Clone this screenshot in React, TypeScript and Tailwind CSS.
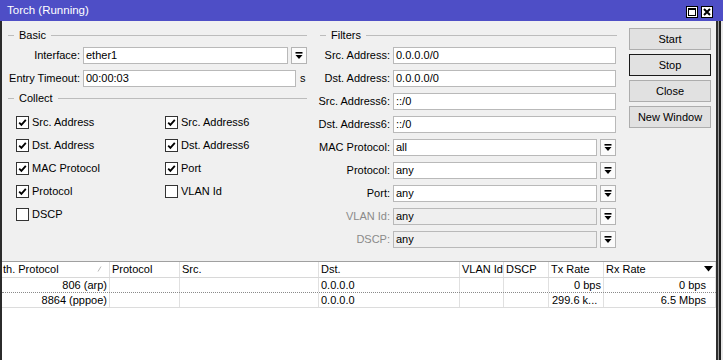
import type { ReactNode } from 'react'

const LINE = 'bg-[#bcbcbc]'

function Legend({ label }: { label: string }) {
  return (
    <div className="flex h-[14px] items-center">
      <span className={`h-px w-[6px] ${LINE}`} />
      <span className="px-[5px] leading-none">{label}</span>
      <span className={`h-px flex-1 ${LINE}`} />
    </div>
  )
}

function DropIcon() {
  return (
    <svg width="8" height="8" viewBox="0 0 8 8">
      <rect x="0.5" y="0" width="7" height="1.6" fill="#000" />
      <path d="M0.5 3 L7.5 3 L4 7 Z" fill="#000" />
    </svg>
  )
}

function DropButton() {
  return (
    <div className="ml-[3px] flex h-[17px] w-[16px] shrink-0 items-center justify-center border border-[#b4b4b4] bg-[#fbfbfb]">
      <DropIcon />
    </div>
  )
}

function Input({ value, w, disabled }: { value: string; w: string; disabled?: boolean }) {
  return (
    <div
      className={`ml-[3px] flex h-[17px] shrink-0 items-center border border-[#b9b9b9] pl-[2px] leading-none ${w} ${
        disabled ? 'bg-[#efefef]' : 'bg-white'
      }`}
    >
      {value}
    </div>
  )
}

function Label({ children, w, muted }: { children: ReactNode; w: string; muted?: boolean }) {
  return (
    <div className={`flex shrink-0 justify-end whitespace-nowrap ${w} ${muted ? 'text-[#8a8a8a]' : ''}`}>
      <span>{children}</span>
    </div>
  )
}

function Check({ label, checked }: { label: string; checked?: boolean }) {
  return (
    <div className="flex h-[23px] items-center gap-[3px]">
      <span className="flex h-[13px] w-[13px] items-center justify-center border border-[#333] bg-white">
        {checked && (
          <svg width="9" height="9" viewBox="0 0 9 9">
            <path d="M1.2 4.6 L3.4 6.9 L7.8 1.8" fill="none" stroke="#000" strokeWidth="1.8" />
          </svg>
        )}
      </span>
      <span>{label}</span>
    </div>
  )
}

const FILTERS: { label: string; value: string; drop?: boolean; muted?: boolean }[] = [
  { label: 'Src. Address:', value: '0.0.0.0/0' },
  { label: 'Dst. Address:', value: '0.0.0.0/0' },
  { label: 'Src. Address6:', value: '::/0' },
  { label: 'Dst. Address6:', value: '::/0' },
  { label: 'MAC Protocol:', value: 'all', drop: true },
  { label: 'Protocol:', value: 'any', drop: true },
  { label: 'Port:', value: 'any', drop: true },
  { label: 'VLAN Id:', value: 'any', drop: true, muted: true },
  { label: 'DSCP:', value: 'any', drop: true, muted: true },
]

const COLS = [
  { title: 'th. Protocol', w: 'w-[108px]' },
  { title: 'Protocol', w: 'w-[70px]' },
  { title: 'Src.', w: 'w-[139px]' },
  { title: 'Dst.', w: 'w-[141px]' },
  { title: 'VLAN Id', w: 'w-[44px]' },
  { title: 'DSCP', w: 'w-[45px]' },
  { title: 'Tx Rate', w: 'w-[55px]' },
  { title: 'Rx Rate', w: 'w-[112px]' },
]

const ROWS = [
  ['806 (arp)', '', '', '0.0.0.0', '', '', '0 bps', '0 bps'],
  ['8864 (pppoe)', '', '', '0.0.0.0', '', '', '299.6 k...', '6.5 Mbps'],
]

// columns whose values sit on the right edge of the cell
const RIGHT = [true, false, false, false, false, false, true, true]

function Button({ label, primary }: { label: string; primary?: boolean }) {
  return (
    <div
      className={`flex h-[22px] items-center justify-center border bg-[#e1e1e1] ${
        primary ? 'border-[#1a1a1a]' : 'border-[#adadad]'
      }`}
    >
      {label}
    </div>
  )
}

export default function App() {
  return (
    <div className="flex h-[360px] w-[723px] flex-col overflow-hidden bg-[#f0f0f0] font-['Liberation_Sans',Arial,sans-serif] text-[11px] text-black">
      {/* title bar */}
      <div className="flex h-[21px] shrink-0 items-center bg-[#4e4ec6] pl-[7px] pr-[10px] text-white">
        <span className="text-[11.5px]">Torch (Running)</span>
        <div className="ml-auto mt-[3px] flex gap-[3px]">
          <span className="flex h-[12px] w-[12px] items-center justify-center border border-black bg-white">
            <span className="h-[8px] w-[8px] border border-black border-t-2" />
          </span>
          <span className="flex h-[12px] w-[12px] items-center justify-center border border-black bg-white">
            <svg width="8" height="8" viewBox="0 0 8 8">
              <path d="M1 1 L7 7 M7 1 L1 7" stroke="#000" strokeWidth="2" />
            </svg>
          </span>
        </div>
      </div>

      <div className="flex min-h-0 flex-1">
        <div className="w-[2px] shrink-0 bg-[#2b2b2b]" />

        <div className="flex w-[714px] shrink-0 flex-col">
          {/* form area */}
          <div className="flex h-[240px] shrink-0">
            {/* Basic + Collect */}
            <div className="ml-[6px] w-[299px] shrink-0 pt-[7px]">
              <Legend label="Basic" />
              <div className="mt-[2px] flex h-[23px] items-center">
                <Label w="w-[72px]">Interface:</Label>
                <Input value="ether1" w="w-[205px]" />
                <DropButton />
              </div>
              <div className="flex h-[23px] items-center">
                <Label w="w-[72px]">Entry Timeout:</Label>
                <Input value="00:00:03" w="w-[213px]" />
                <span className="ml-[4px]">s</span>
              </div>
              <div className="mt-[1px]">
                <Legend label="Collect" />
              </div>
              <div className="mt-[6px] grid grid-cols-[149px_1fr] pl-[8px]">
                <Check label="Src. Address" checked />
                <Check label="Src. Address6" checked />
                <Check label="Dst. Address" checked />
                <Check label="Dst. Address6" checked />
                <Check label="MAC Protocol" checked />
                <Check label="Port" checked />
                <Check label="Protocol" checked />
                <Check label="VLAN Id" />
                <Check label="DSCP" />
              </div>
            </div>

            {/* Filters */}
            <div className="ml-[13px] w-[297px] shrink-0 pt-[7px]">
              <Legend label="Filters" />
              <div className="mt-[2px]">
                {FILTERS.map((f) => (
                  <div key={f.label} className="flex h-[23px] items-center">
                    <Label w="w-[70px]" muted={f.muted}>
                      {f.label}
                    </Label>
                    <Input value={f.value} w={f.drop ? 'w-[204px]' : 'w-[223px]'} disabled={f.muted} />
                    {f.drop && <DropButton />}
                  </div>
                ))}
              </div>
            </div>

            {/* buttons */}
            <div className="ml-[12px] flex w-[82px] shrink-0 flex-col gap-[4px] pt-[7px]">
              <Button label="Start" />
              <Button label="Stop" primary />
              <Button label="Close" />
              <Button label="New Window" />
            </div>
          </div>

          {/* table */}
          <div className="flex-1 bg-white">
            <div className="relative flex h-[17px] border-y border-t-[#a0a0a0] border-b-[#d8d8d8]">
              {COLS.map((c, i) => (
                <div
                  key={c.title}
                  className={`relative flex h-[15px] shrink-0 items-center overflow-hidden whitespace-nowrap border-r border-[#e0e0e0] ${
                    i === 0 ? 'pl-[1px]' : 'pl-[2px]'
                  } ${c.w}`}
                >
                  {c.title}
                  {i === 0 && (
                    <svg className="absolute right-[7px] top-[4px]" width="5" height="6" viewBox="0 0 5 6">
                      <path d="M1 5.5 L4 0.5" stroke="#b8b8b8" strokeWidth="1" />
                    </svg>
                  )}
                </div>
              ))}
              <svg className="absolute right-[3px] top-[4px]" width="9" height="6" viewBox="0 0 9 6">
                <path d="M0 0 L9 0 L4.5 5.5 Z" fill="#000" />
              </svg>
            </div>
            {ROWS.map((r, ri) => (
              <div
                key={ri}
                className={`flex h-[15px] ${
                  ri === 0 ? 'border-b border-dotted border-[#8a8a8a]' : 'border-b border-[#dcdcdc]'
                }`}
              >
                {r.map((v, ci) => (
                  <div
                    key={ci}
                    className={`flex shrink-0 items-center overflow-hidden whitespace-nowrap border-r border-[#e0e0e0] leading-none ${
                      COLS[ci].w
                    } ${RIGHT[ci] ? 'justify-end' : 'justify-start'} ${
                      ci === 7 ? 'pr-[9px]' : RIGHT[ci] && !v.endsWith('...') ? 'pr-[2px]' : 'pl-[2px]'
                    } ${v.endsWith('...') ? '!justify-start pl-[3px]' : ''}`}
                  >
                    {v}
                  </div>
                ))}
              </div>
            ))}
          </div>
        </div>

        {/* right window edge */}
        <div className="flex w-[7px] shrink-0">
          <span className="w-[2px] bg-[#2e2e2e]" />
          <span className="w-[1px] bg-[#9a9a9a]" />
          <span className="w-[2px] bg-[#1e1e1e]" />
          <span className="w-[2px] bg-[#e8e8e8]" />
        </div>
      </div>
    </div>
  )
}
